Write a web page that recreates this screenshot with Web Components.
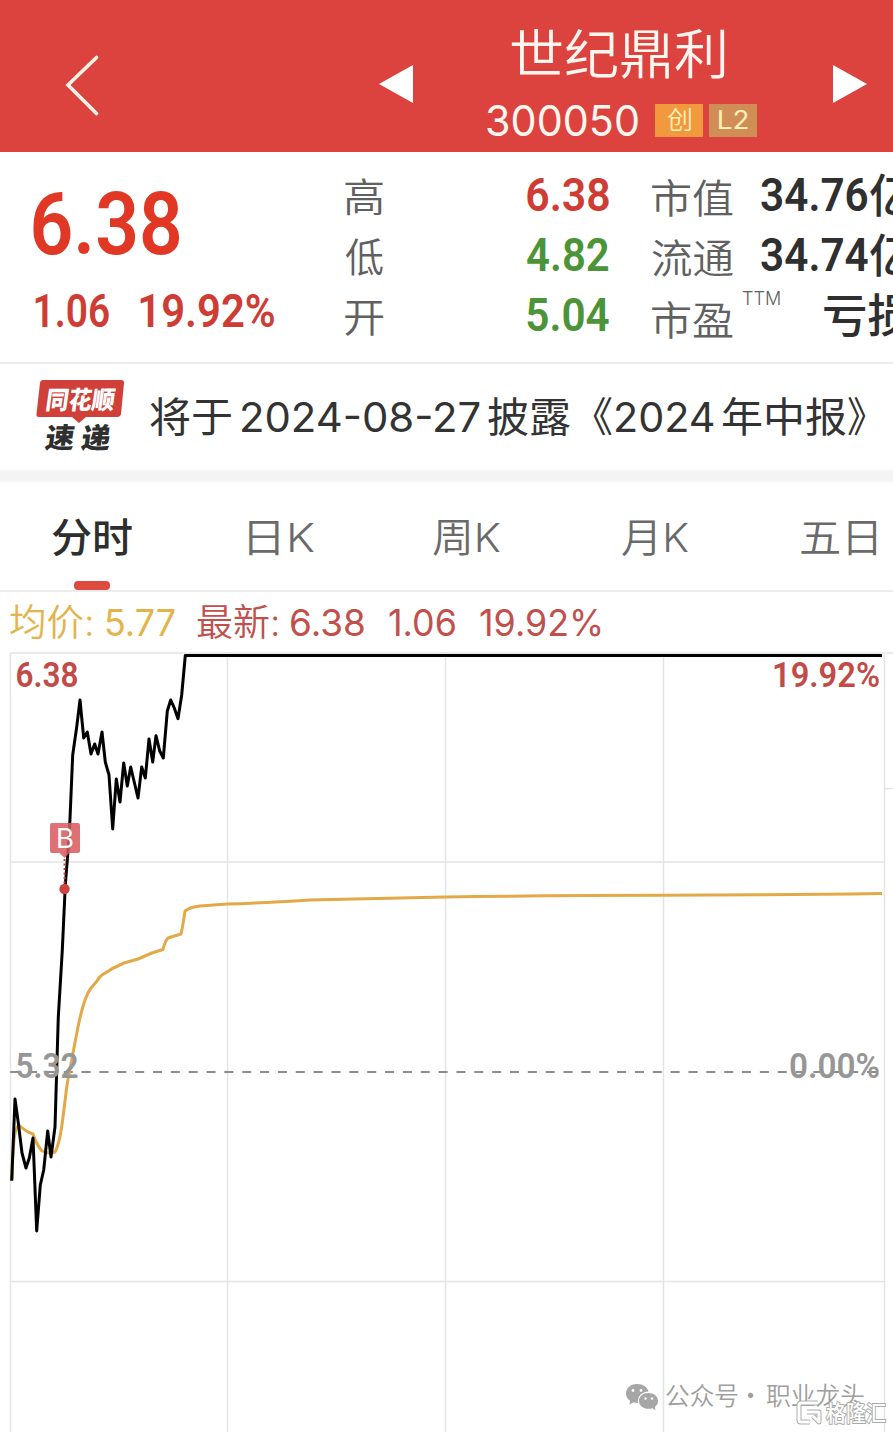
<!DOCTYPE html>
<html lang="zh-CN">
<head>
<meta charset="utf-8">
<title>世纪鼎利 300050</title>
<style>
  body {
    margin: 0;
    background: #fff;
    font-family: Inter, "Noto Sans CJK SC", sans-serif;
    overflow: hidden;
  }
</style>
</head>
<body>
<stock-page></stock-page>

<script>
  // One line of text, stretched so that its ink is exactly `width` px wide
  class FitText extends HTMLElement {
    constructor() {
      super();
      this.attachShadow({ mode: "open" });
      this.shadowRoot.innerHTML = `
        <style>
          :host {
            display: block;
            flex: none;
            white-space: nowrap;
          }
          span {
            display: inline-block;
            transform-origin: 0 50%;
          }
        </style>
        <span><slot></slot></span>
      `;
    }

    connectedCallback() {
      const width = Number(this.getAttribute("width"));
      const style = getComputedStyle(this);
      const ctx = document.createElement("canvas").getContext("2d");
      ctx.font = `${style.fontWeight} ${style.fontSize} ${style.fontFamily}`;
      const m = ctx.measureText(this.textContent);
      const scale = width / (m.actualBoundingBoxLeft + m.actualBoundingBoxRight);
      const shift = m.actualBoundingBoxLeft * scale;

      this.style.width = `${width}px`;
      this.shadowRoot.querySelector("span").style.transform =
        `translateX(${shift}px) scaleX(${scale})`;
    }
  }

  class StockHeader extends HTMLElement {
    constructor() {
      super();
      this.attachShadow({ mode: "open" });
      this.shadowRoot.innerHTML = `
        <style>
          :host {
            display: grid;
            grid-template-columns: 379px 108px 270px 76px auto;
            height: 152px;
            background: #dc433e;
            color: #fff6ef;
          }
          svg {
            display: block;
          }
          .back {
            margin: 54px 0 0 64px;
          }
          .arrow {
            margin-top: 64px;
          }
          .name {
            font-size: 53px;
            font-weight: 350;
            line-height: 60px;
            padding: 25px 0 0 24px;
          }
          .sub {
            display: flex;
            align-items: center;
            height: 34px;
            margin-top: 18px;
          }
          .code {
            font-size: 43px;
            line-height: 34px;
            margin-right: 17px;
          }
          .chip {
            display: flex;
            align-items: center;
            justify-content: center;
            width: 48px;
            height: 33px;
            background: #f2983d;
            color: #fff0b8;
            font-size: 25px;
            font-weight: 350;
            line-height: 33px;
          }
          .chip + .chip {
            margin-left: 6px;
            background: #d18d56;
            font-weight: 400;
          }
        </style>
        <svg class="back" width="36" height="64" viewBox="0 0 36 64">
          <path d="M32.5 3.5 4 31 32.5 59.500" fill="none" stroke="#fff3e8" stroke-width="3.6" stroke-linecap="round"/>
        </svg>
        <svg class="arrow" width="36" height="40" viewBox="0 0 36 40">
          <path d="M0 20 34 1V39Z" fill="#fff"/>
        </svg>
        <div>
          <div class="name"><fit-text width="214">世纪鼎利</fit-text></div>
          <div class="sub">
            <fit-text class="code" width="151">300050</fit-text>
            <div class="chip"><fit-text width="24">创</fit-text></div>
            <div class="chip"><fit-text width="29">L2</fit-text></div>
          </div>
        </div>
        <i></i>
        <svg class="arrow" width="36" height="40" viewBox="0 0 36 40">
          <path d="M0 1 34 20 0 39Z" fill="#fff"/>
        </svg>
      `;
    }
  }

  class QuoteBoard extends HTMLElement {
    constructor() {
      super();
      this.attachShadow({ mode: "open" });
      this.shadowRoot.innerHTML = `
        <style>
          :host {
            display: grid;
            grid-template-columns: 345px 182px 125px auto;
            height: 212px;
            border-bottom: 2px solid #ececec;
            box-sizing: border-box;
            overflow: hidden;
            color: #606060;
          }
          .num {
            font-family: Roboto, "Noto Sans CJK SC", sans-serif;
            font-weight: 600;
            font-size: 47px;
          }
          .up { color: #ce3c34; }
          .down { color: #4b9438; }
          .last {
            padding: 26px 0 0 33px;
          }
          .price {
            font-size: 88px;
            line-height: 92px;
            color: #e13825;
          }
          .change {
            display: flex;
            gap: 31px;
            padding-left: 2px;
            font-size: 46px;
            line-height: 82px;
          }
          .col {
            padding-top: 13px;
            line-height: 60px;
          }
          .label {
            padding-top: 16px;
            font-size: 40px;
            font-weight: 350;
          }
          .caps > div {
            display: flex;
            height: 60px;
          }
          .caps .name {
            padding-top: 4px;
            font-size: 40px;
            font-weight: 350;
            margin-right: 28px;
          }
          .caps .num {
            color: #2f2f2f;
          }
          .unit {
            font-size: 46px;
            font-weight: 500;
            color: #2f2f2f;
            margin-left: 2px;
          }
          .caps .pe {
            padding-top: 6px;
            margin-right: 9px;
          }
          .ttm {
            font-size: 18px;
            font-weight: 300;
            line-height: 28px;
            margin-right: 42px;
          }
        </style>
        <div class="last">
          <fit-text class="num price" width="147">6.38</fit-text>
          <div class="change num up">
            <fit-text width="74">1.06</fit-text>
            <fit-text width="134">19.92%</fit-text>
          </div>
        </div>
        <div class="col label">
          <fit-text width="38">高</fit-text>
          <fit-text width="38">低</fit-text>
          <fit-text width="38">开</fit-text>
        </div>
        <div class="col num">
          <fit-text class="up" width="82">6.38</fit-text>
          <fit-text class="down" width="82">4.82</fit-text>
          <fit-text class="down" width="82">5.04</fit-text>
        </div>
        <div class="col caps">
          <div><fit-text class="name" width="81">市值</fit-text><fit-text class="num" width="107">34.76</fit-text><fit-text class="unit" width="42">亿</fit-text></div>
          <div><fit-text class="name" width="81">流通</fit-text><fit-text class="num" width="107">34.74</fit-text><fit-text class="unit" width="42">亿</fit-text></div>
          <div><fit-text class="name pe" width="81">市盈</fit-text><fit-text class="ttm" width="38">TTM</fit-text><fit-text class="unit" width="88">亏损</fit-text></div>
        </div>
      `;
    }
  }

  class NewsStrip extends HTMLElement {
    constructor() {
      super();
      this.attachShadow({ mode: "open" });
      this.shadowRoot.innerHTML = `
        <style>
          :host {
            display: flex;
            box-sizing: border-box;
            height: 118px;
            padding-left: 35px;
            border-bottom: 12px solid #f4f4f4;
            color: #333;
            font-size: 41px;
            line-height: 106px;
          }
          svg {
            flex: none;
            margin: 15px 25px 0 0;
          }
          text {
            font-family: "Noto Sans CJK SC", sans-serif;
            font-weight: 900;
          }
        </style>
        <svg width="90" height="76" viewBox="0 0 90 76">
          <path d="M8 1H86Q89.500 1 89 4L86 35Q85.500 38 82 38H51L44 44 37 38H4Q1 38 1.500 35L5 4Q5.500 1 8 1Z" fill="#d03f38"/>
          <g transform="skewX(-8)">
            <text x="14" y="30" font-size="25" fill="#fff" textLength="69" lengthAdjust="spacingAndGlyphs">同花顺</text>
            <text x="19" y="69" font-size="28" fill="#2f2f2f" textLength="29" lengthAdjust="spacingAndGlyphs">速</text>
            <text x="55" y="69" font-size="28" fill="#2f2f2f" textLength="29" lengthAdjust="spacingAndGlyphs">递</text>
          </g>
        </svg>
        <fit-text width="81">将于</fit-text>
        <fit-text width="238" style="margin-left: 11px">2024-08-27</fit-text>
        <fit-text width="82" style="margin-left: 8px">披露</fit-text>
        <fit-text width="19" style="margin-left: 23px">《</fit-text>
        <fit-text width="98" style="margin-left: 4px">2024</fit-text>
        <fit-text width="124" style="margin-left: 8px">年中报</fit-text>
        <fit-text width="18" style="margin-left: 2px">》</fit-text>
      `;
    }
  }

  class PeriodTabs extends HTMLElement {
    constructor() {
      super();
      this.attachShadow({ mode: "open" });
      this.shadowRoot.innerHTML = `
        <style>
          :host {
            display: flex;
            box-sizing: border-box;
            height: 110px;
            padding-left: 52px;
            border-bottom: 2px solid #ececec;
            color: #6a6a6a;
            font-size: 40px;
            font-weight: 350;
            line-height: 112px;
          }
          .active {
            display: flex;
            flex-direction: column;
            align-items: center;
            font-weight: 500;
            color: #2e2e2e;
            margin-right: 117px;
          }
          .active::after {
            content: "";
            width: 36px;
            height: 9px;
            margin-top: -13px;
            border-radius: 4px;
            background: #dc4a40;
          }
        </style>
        <div class="active"><fit-text width="80">分时</fit-text></div>
        <fit-text width="65" style="margin-right: 119px">日K</fit-text>
        <fit-text width="67" style="margin-right: 122px">周K</fit-text>
        <fit-text width="66" style="margin-right: 113px">月K</fit-text>
        <fit-text width="76">五日</fit-text>
      `;
    }
  }

  class ChartLegend extends HTMLElement {
    constructor() {
      super();
      this.attachShadow({ mode: "open" });
      this.shadowRoot.innerHTML = `
        <style>
          :host {
            display: flex;
            height: 60px;
            padding-left: 10px;
            font-size: 37px;
            line-height: 62px;
            color: #c1504c;
          }
          .avg { color: #e3b44c; }
          .key { font-weight: 350; }
        </style>
        <fit-text class="avg key" width="82">均价:</fit-text>
        <fit-text class="avg" width="69" style="margin-left: 14px">5.77</fit-text>
        <fit-text class="key" width="81" style="margin-left: 22px">最新:</fit-text>
        <fit-text width="73" style="margin-left: 13px">6.38</fit-text>
        <fit-text width="66" style="margin-left: 25px">1.06</fit-text>
        <fit-text width="121" style="margin-left: 25px">19.92%</fit-text>
      `;
    }
  }

  const PRICE = `11.700,1180.700 15,1099 18.300,1123 22,1153 26,1168 29.300,1158 33,1138
    36.700,1231 40.300,1185 43.700,1170 47.700,1131 51,1157 55,1127 56.700,1070 58.300,1017
    62.300,950 65.300,885 69.300,835 72.700,755 76.700,727 80,700 83.700,738 87.300,732
    91,754 94.700,744 98,754 102,732 105.300,762 109,775 112.700,829 116.300,779 120,802
    123.700,763 127.300,786 130.700,767 138,798 141.700,767 145.300,778 149,739
    152.700,762 156,735.700 159.700,751 163.300,758 167.300,711 170.700,700 174.300,708
    178,718.700 181.700,695 185.300,655.500 882,655.500`;

  const AVERAGE = `M12 1180Q13 1127 19 1125Q26 1132 33 1134Q36 1144 42 1151Q50 1155 55 1152
    Q60 1143 63 1117L67 1085L73 1053L78 1027Q84 997 91 988L97 981Q99 977 102 975
    Q112 968 124 963L138 959L152 953L163 949.500Q165 941 168 938L176 935.500L181 934
    Q183 925 185 911Q190 907 200 906L227 904Q260 903 310 900Q380 898.500 445 897
    Q550 895.500 663 895.300Q780 895 882 893.500`;

  class MinuteChart extends HTMLElement {
    constructor() {
      super();
      this.attachShadow({ mode: "open" });
      this.shadowRoot.innerHTML = `
        <style>
          :host {
            display: block;
          }
          svg {
            display: block;
          }
          .axis {
            font: 600 35px Roboto, sans-serif;
          }
          .mark {
            font: 400 27px Inter, sans-serif;
          }
          .source {
            font: 350 25px "Noto Sans CJK SC", sans-serif;
            fill: #9e9e9e;
          }
          .brand {
            font: 500 22px "Noto Sans CJK SC", sans-serif;
            fill: #fff;
            stroke: #ababab;
            stroke-width: 2px;
            paint-order: stroke;
          }
        </style>
        <svg width="893" height="780" viewBox="0 652 893 780">
          <g fill="none" stroke="#e4e4e4" stroke-width="1.500">
            <path d="M10.500 1432V653H884.500V1432M10.500 862H884.500M10.500 1281.500H884.500"/>
            <path d="M227.500 653V1432M445.500 653V1432M663.500 653V1432"/>
            <path d="M886 653H893M885 788.500H893"/>
          </g>
          <path d="M10.200 1072H884" stroke="#8c8c8c" stroke-width="1.800" stroke-dasharray="9 8.850"/>

          <path d="${AVERAGE}" fill="none" stroke="#e3a948" stroke-width="3" stroke-linejoin="round"/>
          <polyline points="${PRICE}" fill="none" stroke="#000" stroke-width="3" stroke-linejoin="round"/>

          <g class="axis">
            <text x="15.500" y="687" fill="#c24a47" textLength="63" lengthAdjust="spacingAndGlyphs">6.38</text>
            <text x="772" y="687" fill="#c24a47" textLength="108" lengthAdjust="spacingAndGlyphs">19.92%</text>
            <text x="15.500" y="1078" fill="#969696" textLength="63" lengthAdjust="spacingAndGlyphs">5.32</text>
            <text x="789" y="1078" fill="#969696" textLength="91" lengthAdjust="spacingAndGlyphs">0.00%</text>
          </g>

          <!-- buy marker -->
          <path d="M52 823H78Q80 823 80 825V851Q80 853 78 853H69.500L64.500 858 59.500 853H52Q50 853 50 851V825Q50 823 52 823Z" fill="#d85a5c" fill-opacity=".86"/>
          <path d="M64.500 859V884" stroke="#c8403f" stroke-width="2" stroke-dasharray="2 2.500"/>
          <circle cx="64.500" cy="889" r="5.200" fill="#cd4340"/>
          <text class="mark" x="56" y="848" fill="#fff" textLength="18" lengthAdjust="spacingAndGlyphs">B</text>

          <!-- source account -->
          <path d="M637 1384C630.500 1384 626 1388 626 1393.500C626 1396.500 627.500 1399 630 1400.800L629.500 1404.500L633.500 1402.300C635 1402.800 636 1403 638 1403C637 1396.500 642 1391.500 648.500 1391.500C647.500 1387 643 1384 637 1384Z" fill="#a6a6a6"/>
          <path d="M648.500 1393C643 1393 639 1396.500 639 1401C639 1405.500 643 1408.800 648.500 1408.800C650 1408.800 651 1408.600 652.300 1408.200L655.500 1410L655 1406.800C657 1405.300 658 1403.300 658 1401C658 1396.500 654 1393 648.500 1393Z" fill="#a6a6a6"/>
          <g fill="#fff">
            <circle cx="633" cy="1390.500" r="1.400"/><circle cx="641" cy="1390.500" r="1.400"/>
            <circle cx="645.500" cy="1398.500" r="1.200"/><circle cx="652" cy="1398.500" r="1.200"/>
          </g>
          <g class="source">
            <text x="665" y="1405" textLength="74" lengthAdjust="spacingAndGlyphs">公众号</text>
            <text x="738" y="1405">·</text>
            <text x="766" y="1405" textLength="99" lengthAdjust="spacingAndGlyphs">职业龙头</text>
          </g>

          <!-- brand stamp -->
          <g fill="none" stroke-linejoin="round">
            <path d="M818 1403H801Q799 1403 799 1405V1420Q799 1422 801 1422H810M807 1412H819V1422L813 1416" stroke="#ababab" stroke-width="5"/>
            <path d="M818 1403H801Q799 1403 799 1405V1420Q799 1422 801 1422H810M807 1412H819V1422L813 1416" stroke="#fff" stroke-width="3"/>
          </g>
          <text class="brand" x="826" y="1421" textLength="60" lengthAdjust="spacingAndGlyphs">格隆汇</text>
        </svg>
      `;
    }
  }

  class StockPage extends HTMLElement {
    constructor() {
      super();
      this.attachShadow({ mode: "open" });
      this.shadowRoot.innerHTML = `
        <style>
          :host {
            display: flex;
            flex-direction: column;
            width: 893px;
            height: 1432px;
            overflow: hidden;
          }
        </style>
        <stock-header></stock-header>
        <quote-board></quote-board>
        <news-strip></news-strip>
        <period-tabs></period-tabs>
        <chart-legend></chart-legend>
        <minute-chart></minute-chart>
      `;
    }
  }

  customElements.define("fit-text", FitText);
  customElements.define("stock-header", StockHeader);
  customElements.define("quote-board", QuoteBoard);
  customElements.define("news-strip", NewsStrip);
  customElements.define("period-tabs", PeriodTabs);
  customElements.define("chart-legend", ChartLegend);
  customElements.define("minute-chart", MinuteChart);
  customElements.define("stock-page", StockPage);
</script>
</body>
</html>
